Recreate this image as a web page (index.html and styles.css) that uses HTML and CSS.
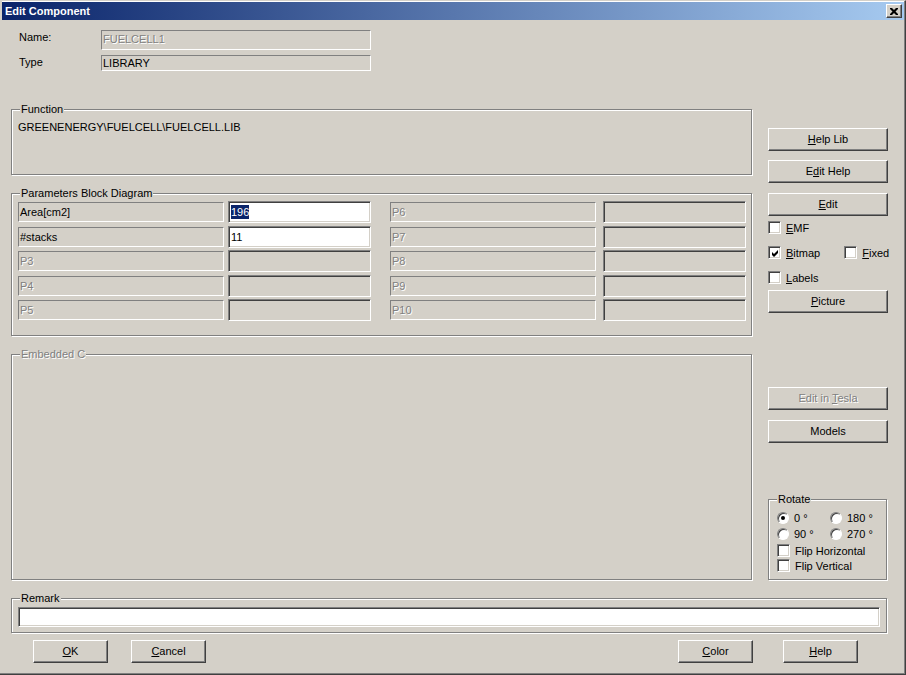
FILE: index.html
```html
<!DOCTYPE html>
<html lang="en">
<head>
	<meta charset="UTF-8">
	<title>Edit Component</title>
	<link rel="stylesheet" href="styles.css">
</head>
<body>
	<div class="window">
		<div class="titlebar">
			<span class="title">Edit Component</span>
			<span class="close">
				<svg width="8" height="7" viewBox="0 0 8 7"><path d="M0 0h2l2 2 2-2h2v1l-2.5 2.5L8 6v1H6L4 5 2 7H0V6l2.5-2.5L0 1z" fill="#000"/></svg>
			</span>
		</div>

		<div class="content">
			<!-- name / type -->
			<div class="header">
				<div class="hrow name-row">
					<span class="hlabel">Name:</span>
					<div class="static disabled">FUELCELL1</div>
				</div>
				<div class="hrow type-row">
					<span class="hlabel">Type</span>
					<div class="static">LIBRARY</div>
				</div>
			</div>

			<div class="main">
				<div class="left">
					<div class="group function">
						<span class="legend">Function</span>
						<div class="fn-text">GREENENERGY\FUELCELL\FUELCELL.LIB</div>
					</div>

					<div class="group params">
						<span class="legend">Parameters Block Diagram</span>
						<div class="param-grid">
							<div class="plabel">Area[cm2]</div>
							<div class="pval active"><span class="sel">196</span></div>
							<div class="plabel disabled col3">P6</div>
							<div class="pval col4"></div>

							<div class="plabel">#stacks</div>
							<div class="pval active">11</div>
							<div class="plabel disabled col3">P7</div>
							<div class="pval col4"></div>

							<div class="plabel disabled">P3</div>
							<div class="pval"></div>
							<div class="plabel disabled col3">P8</div>
							<div class="pval col4"></div>

							<div class="plabel disabled">P4</div>
							<div class="pval"></div>
							<div class="plabel disabled col3">P9</div>
							<div class="pval col4"></div>

							<div class="plabel disabled">P5</div>
							<div class="pval"></div>
							<div class="plabel disabled col3">P10</div>
							<div class="pval col4"></div>
						</div>
					</div>

					<div class="group embedded">
						<span class="legend disabled">Embedded C</span>
					</div>
				</div>

				<div class="right">
					<div class="btn help-lib"><u>H</u>elp Lib</div>
					<div class="btn edit-help">E<u>d</u>it Help</div>
					<div class="btn edit"><u>E</u>dit</div>

					<div class="chk-row emf">
						<span class="check"></span><span class="chk-text"><u>E</u>MF</span>
					</div>
					<div class="chk-row bitmap">
						<span class="check on"><svg width="7" height="7" viewBox="0 0 7 7"><path d="M0 2l2 2 4-4v3L2 7 0 5z" fill="#000"/></svg></span><span class="chk-text"><u>B</u>itmap</span>
						<span class="check fixed"></span><span class="chk-text"><u>F</u>ixed</span>
					</div>
					<div class="chk-row labels">
						<span class="check"></span><span class="chk-text"><u>L</u>abels</span>
					</div>

					<div class="btn picture"><u>P</u>icture</div>
					<div class="btn tesla disabled">Edit in <u>T</u>esla</div>
					<div class="btn models">Models</div>

					<div class="group rotate">
						<span class="legend">Rotate</span>
						<div class="radio-grid">
							<div class="radio-item"><span class="radio on"></span>0 °</div>
							<div class="radio-item"><span class="radio"></span>180 °</div>
							<div class="radio-item"><span class="radio"></span>90 °</div>
							<div class="radio-item"><span class="radio"></span>270 °</div>
						</div>
						<div class="flip flip-h"><span class="check"></span>Flip Horizontal</div>
						<div class="flip flip-v"><span class="check"></span>Flip Vertical</div>
					</div>
				</div>
			</div>

			<div class="group remark">
				<span class="legend">Remark</span>
				<div class="edit-box"></div>
			</div>

			<div class="bottom">
				<div class="btn wide ok"><u>O</u>K</div>
				<div class="btn wide cancel"><u>C</u>ancel</div>
				<div class="btn wide color"><u>C</u>olor</div>
				<div class="btn wide help"><u>H</u>elp</div>
			</div>
		</div>
	</div>
</body>
</html>
```

FILE: styles.css
```css
* {
	box-sizing: border-box;
}

body {
	margin: 0;
	font-family: "Liberation Sans", Arial, sans-serif;
	font-size: 11px;
	color: #000;
	background: #d4d0c8;
}

.window {
	width: 906px;
	height: 675px;
	background: #d4d0c8;
	border-top: 1px solid #d4d0c8;
	border-right: 1px solid #404040;
	border-bottom: 1px solid #404040;
	box-shadow: inset -1px -1px 0 #808080;
	overflow: hidden;
}

/* title bar */
.titlebar {
	height: 19px;
	margin: 0 1px 0 2px;
	border-top: 1px solid #fff;
	background: linear-gradient(to right, #0a246a, #a6caf0);
	display: flex;
	align-items: center;
	justify-content: space-between;
}

.title {
	color: #fff;
	font-weight: bold;
	padding-left: 3px;
	line-height: 18px;
}

.close {
	width: 16px;
	height: 14px;
	margin-right: 2px;
	background: #d4d0c8;
	border-top: 1px solid #fff;
	border-left: 1px solid #fff;
	border-right: 1px solid #404040;
	border-bottom: 1px solid #404040;
	box-shadow: inset -1px -1px 0 #808080;
	display: flex;
	align-items: center;
	justify-content: center;
}

.close svg {
	display: block;
	margin-left: -1px;
}

.content {
	padding: 0 17px 0 11px;
}

.disabled {
	color: #808080;
	text-shadow: 1px 1px 0 #fff;
}

/* name / type */
.header {
	padding-left: 8px;
	padding-top: 10px;
}

.hrow {
	display: flex;
	align-items: flex-start;
}

.type-row {
	margin-top: 5px;
}

.hlabel {
	width: 82px;
	line-height: 14px;
}

.static {
	width: 270px;
	border: 1px solid;
	border-color: #808080 #fff #fff #808080;
	padding-left: 1px;
}

.name-row .static {
	height: 20px;
	line-height: 17px;
}

.type-row .static {
	height: 16px;
	line-height: 14px;
}

/* group boxes */
.group {
	position: relative;
	border: 1px solid #808080;
	box-shadow: inset 1px 1px 0 #fff, 1px 1px 0 #fff;
}

.legend {
	position: absolute;
	top: -7px;
	left: 8px;
	padding: 0 1px;
	line-height: 13px;
	background: #d4d0c8;
}

.main {
	display: flex;
	align-items: flex-start;
	margin-top: 38px;
}

.left {
	width: 741px;
	margin-right: 16px;
}

.function {
	height: 66px;
	padding: 11px 6px 0;
}

.fn-text {
	line-height: 13px;
}

.params {
	height: 143px;
	margin-top: 18px;
	padding: 7px 6px 0;
}

.param-grid {
	display: grid;
	grid-template-columns: 206px 147px 225px 150px;
	grid-auto-rows: 22px;
	row-gap: 2.5px;
	align-items: center;
}

.plabel {
	height: 20px;
	line-height: 18px;
	padding-left: 1px;
	border: 1px solid;
	border-color: #808080 #fff #fff #808080;
}

.plabel.col3 {
	margin-left: 19px;
}

.pval {
	height: 22px;
	margin-left: 4px;
	line-height: 18px;
	border: 1px solid;
	border-color: #808080 #fff #fff #808080;
	box-shadow: inset 1px 1px 0 #404040, inset -1px -1px 0 #d4d0c8;
	padding-top: 1px;
	padding-left: 2px;
}

.pval.col4 {
	margin-left: 7px;
}

.pval.active {
	background: #fff;
}

.sel {
	background: #0a246a;
	color: #fff;
	padding: 1px 0;
}

.embedded {
	height: 226px;
	margin-top: 18px;
}

/* right column */
.right {
	width: 120px;
	display: flex;
	flex-direction: column;
}

.btn {
	height: 23px;
	line-height: 20px;
	text-align: center;
	background: #d4d0c8;
	border-top: 1px solid #fff;
	border-left: 1px solid #fff;
	border-right: 1px solid #404040;
	border-bottom: 1px solid #404040;
	box-shadow: inset -1px -1px 0 #808080;
}

.help-lib {
	margin-top: 19px;
}

.edit-help {
	margin-top: 9px;
}

.edit {
	margin-top: 10px;
}

.chk-row {
	display: flex;
	align-items: center;
	height: 13px;
	margin-top: 12px;
}

.emf {
	margin-top: 5px;
}

.check {
	width: 13px;
	height: 13px;
	flex: none;
	background: #fff;
	border: 1px solid;
	border-color: #808080 #fff #fff #808080;
	box-shadow: inset 1px 1px 0 #404040, inset -1px -1px 0 #d4d0c8;
	display: flex;
	align-items: center;
	justify-content: center;
}

.check svg {
	display: block;
	margin: 1px 0 0 1px;
}

.chk-text {
	margin-left: 5px;
}

.check.fixed {
	margin-left: 24px;
}

.picture {
	margin-top: 6px;
}

.tesla {
	margin-top: 74px;
}

.models {
	margin-top: 10px;
}

.rotate {
	width: 119px;
	height: 81px;
	margin-top: 56px;
	padding: 12px 0 0 8px;
}

.radio-grid {
	display: grid;
	grid-template-columns: 53px 50px;
	row-gap: 4px;
}

.radio-item {
	display: flex;
	align-items: center;
	height: 12px;
	line-height: 12px;
}

.radio {
	width: 12px;
	height: 12px;
	margin-right: 5px;
	border-radius: 50%;
	background: #fff;
	border: 1px solid;
	border-color: #808080 #fff #fff #808080;
	box-shadow: inset 1px 1px 0 #404040;
	position: relative;
}

.radio.on::after {
	content: "";
	position: absolute;
	left: 3px;
	top: 3px;
	width: 4px;
	height: 4px;
	border-radius: 50%;
	background: #000;
}

.flip {
	display: flex;
	align-items: center;
	height: 13px;
}

.flip .check {
	margin-right: 5px;
}

.flip-h {
	margin-top: 4px;
}

.flip-v {
	margin-top: 2px;
}

/* remark */
.remark {
	width: 876px;
	height: 35px;
	margin-top: 18px;
	padding: 8px 6px 0;
}

.edit-box {
	height: 20px;
	background: #fff;
	border: 1px solid;
	border-color: #808080 #fff #fff #808080;
	box-shadow: inset 1px 1px 0 #404040, inset -1px -1px 0 #d4d0c8;
}

/* bottom buttons */
.bottom {
	display: flex;
	margin-top: 7px;
}

.wide {
	width: 75px;
}

.ok {
	margin-left: 22px;
}

.cancel {
	margin-left: 23px;
}

.color {
	margin-left: auto;
}

.help {
	margin-left: 30px;
	margin-right: 30px;
}
```
